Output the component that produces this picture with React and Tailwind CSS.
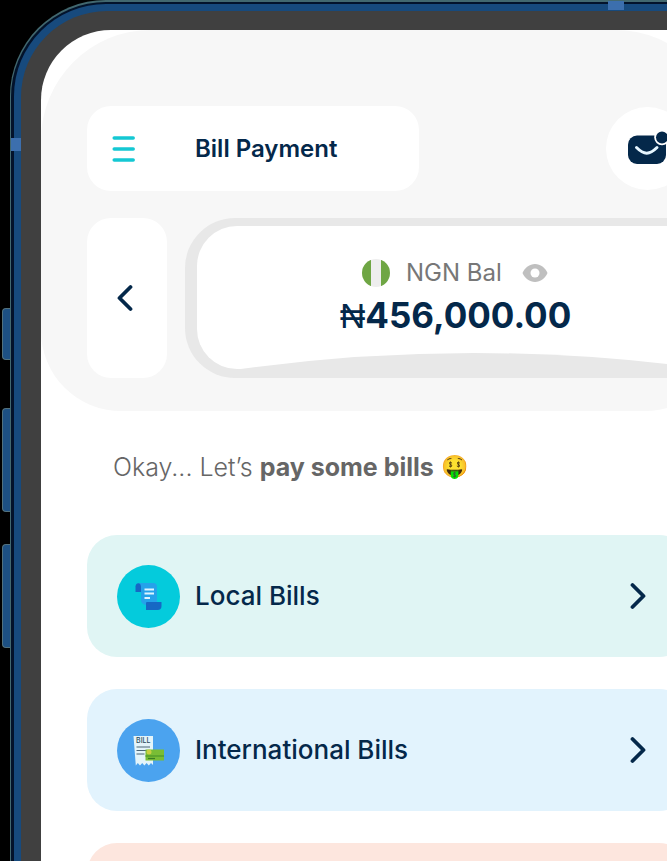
import React from 'react';

const ChevronIcon = ({ direction }) => (
  <svg
    className={direction === 'left' ? 'w-4 h-7 rotate-180' : 'w-4 h-7'}
    viewBox="0 0 16 28"
    fill="none"
    stroke="#04284a"
    strokeWidth="3.800"
    strokeLinecap="round"
    strokeLinejoin="round"
    aria-hidden="true"
  >
    <path d="M2.500 3 13.500 14 2.500 25" />
  </svg>
);

const MenuIcon = () => (
  <svg className="w-6 h-7" viewBox="0 0 24 28" stroke="#14c8d3" strokeWidth="3.500" strokeLinecap="round" aria-hidden="true">
    <path d="M2.200 3h19M2.200 14h19M2.200 25h19" />
  </svg>
);

const MailIcon = () => (
  <svg className="w-10 h-9" viewBox="0 0 40 36" fill="none" aria-hidden="true">
    <rect x="0" y="4.500" width="38" height="28.500" rx="9" fill="#04284a" />
    <path d="M8.500 16.500c7.500 7.500 13 7.500 20.500 0" stroke="#e6f6ff" strokeWidth="3" strokeLinecap="round" />
    <circle cx="34" cy="6.500" r="7.800" fill="#fff" />
    <circle cx="34" cy="6.500" r="6" fill="#04284a" />
  </svg>
);

const FlagIcon = () => (
  <svg className="w-7 h-7" viewBox="0 0 28 28" role="img" aria-label="Nigeria">
    <clipPath id="flag">
      <circle cx="14" cy="14" r="14" />
    </clipPath>
    <g clipPath="url(#flag)">
      <path fill="#6fa644" d="M0 0h9v28H0zM19 0h9v28h-9z" />
      <path fill="#eee" d="M9 0h10v28H9z" />
    </g>
  </svg>
);

const EyeIcon = () => (
  <svg className="w-[26px] h-5" viewBox="0 0 26 20" aria-hidden="true">
    <path fill="#bfbfbf" d="M.5 10C3 4.500 7.500 1 13 1s10 3.500 12.500 9C23 15.500 18.500 19 13 19S3 15.500.5 10z" />
    <circle cx="13" cy="10" r="4.500" fill="#fff" />
  </svg>
);

const ScrollIcon = () => (
  <svg className="w-[63px] h-[63px]" viewBox="0 0 63 63" aria-hidden="true">
    <circle cx="31.500" cy="31.500" r="31.500" fill="#04cbdc" />
    <path d="M21 18h15a4 4 0 0 1 4 4v18H29a5 5 0 0 1-5-5V24z" fill="#25a2ea" />
    <path d="M18.500 27v-5.500c0-4.500 5.500-4.500 5.500 0V27z" fill="#1668c4" />
    <path d="M30 37h14.500v4a4 4 0 0 1-4 4H29v-7a1 1 0 0 1 1-1z" fill="#1668c4" />
    <path d="M27.500 24.500H37M27.500 28.500H37M27.500 33H33" stroke="#dff5ff" strokeWidth="2" />
  </svg>
);

const ReceiptIcon = () => (
  <svg className="w-[63px] h-[63px]" viewBox="0 0 63 63" aria-hidden="true">
    <circle cx="31.500" cy="31.500" r="31.500" fill="#4ba3ef" />
    <path d="M16.500 17H36v29l-2-2-2.200 2.500-2.200-2.500-2.200 2.500-2.200-2.500-2.200 2.500-2.200-2.500-2 2.500z" fill="#e3f4fa" />
    <text x="26.300" y="24" textAnchor="middle" fontSize="7" fontWeight="500" fill="#2c4a5c">BILL</text>
    <path d="M19.500 28H33M19.500 31.500h10M19.500 35h8" stroke="#4a6475" strokeWidth="1.200" />
    <path d="M28.500 30.500H47v11H28.500z" fill="#79bd35" />
    <path d="M28.500 37H47" stroke="#559f2b" strokeWidth="1.500" />
    <path d="M31 39.500h7" stroke="#387d25" strokeWidth="1.200" />
    <circle cx="32" cy="33" r="2.500" fill="#c9cf41" />
  </svg>
);

const bills = [
  { name: 'Local Bills', icon: <ScrollIcon />, bg: 'bg-[#e0f5f4]' },
  { name: 'International Bills', icon: <ReceiptIcon />, bg: 'bg-[#e2f3fd]' }
];

const sideButton = 'w-2 shrink-0 rounded-l-sm border border-r-0 border-[#52717d] bg-[#1d5083]';

const Phone = ({ children }) => (
  <div className="flex h-screen overflow-hidden bg-black font-['Inter','Noto_Sans',sans-serif]">
    {/* volume and mute keys */}
    <div className="flex w-[10px] shrink-0 flex-col items-end pt-[308px]">
      <div className={`${sideButton} h-[52px]`} />
      <div className={`${sideButton} mt-12 h-[104px]`} />
      <div className={`${sideButton} mt-8 h-[104px]`} />
    </div>

    {/* metal frame, the right side runs out of view */}
    <div className="relative flex w-[calc(100%+48px)] shrink-0 rounded-tl-[96px] bg-[#42686f] pt-0.5 pl-px">
      <div className="flex grow rounded-tl-[95px] bg-[#03132b] pt-0.5 pl-[3px]">
        <div className="flex grow rounded-tl-[92px] bg-[#174a7d] pt-[7px] pl-[7px]">
          <div className="flex grow rounded-tl-[86px] bg-[#404040] pt-[19px] pl-5">
            <main className="grow overflow-hidden rounded-tl-[70px] bg-white">{children}</main>
          </div>
        </div>
      </div>
      <div className="absolute left-px top-[138px] h-[13px] w-[10px] bg-[#3c6fae]" />
      <div className="absolute left-[598px] top-px h-[9px] w-4 bg-[#3c6fae]" />
    </div>
  </div>
);

const BalanceCard = () => (
  <div className="relative -mr-12 grow rounded-[50px] bg-[#e8e8e8] pt-2 pr-3 pb-[9px] pl-3">
    <div className="flex h-full flex-col rounded-[40px] bg-white pt-[31px] pl-[143px]">
      <div className="relative z-10 flex items-center gap-4 pl-[22px] text-2xl leading-8 text-[#777]">
        <FlagIcon />
        <span>NGN Bal</span>
        <button type="button" aria-label="Hide balance" className="ml-1">
          <EyeIcon />
        </button>
      </div>
      <p className="relative z-10 mt-0.5 text-[35px] leading-12 font-bold text-[#04284a]">
        <span className="font-['Liberation_Sans_Narrow','Liberation_Sans',sans-serif] font-normal">₦</span>456,000.00
      </p>
    </div>
    <svg className="absolute bottom-0 left-12 h-[26px] w-[480px]" viewBox="0 0 480 26" aria-hidden="true">
      <path d="M0 18Q242-16 480 18v8H0z" fill="#e8e8e8" />
    </svg>
  </div>
);

const App = () => {
  return (
    <Phone>
      <header className="rounded-[110px] rounded-b-[80px] bg-[#f7f7f7] pt-[76px] pr-9 pb-[33px] pl-[46px]">
        <div className="flex items-center justify-between">
          <div className="flex h-[85px] w-[332px] items-center gap-[59px] rounded-3xl bg-white pl-[25px]">
            <button type="button" aria-label="Menu">
              <MenuIcon />
            </button>
            <h1 className="text-2xl font-semibold text-[#04284a]">Bill Payment</h1>
          </div>
          <button type="button" aria-label="Messages" className="flex size-[83px] items-center justify-center rounded-full bg-white">
            <MailIcon />
          </button>
        </div>
        <div className="mt-[27px] flex h-40 gap-[18px]">
          <button type="button" aria-label="Back" className="flex w-20 shrink-0 items-center justify-center rounded-3xl bg-white pr-1">
            <ChevronIcon direction="left" />
          </button>
          <BalanceCard />
        </div>
      </header>

      <p className="mt-10 pl-[72px] text-[25px] leading-8 text-[#666]">
        <span className="font-light">Okay... Let’s</span> <b className="font-bold">pay some bills</b>{' '}
        <span className="align-[2px] text-[22px] leading-none">🤑</span>
      </p>

      <div className="mt-[52px] flex flex-col gap-8 pr-9 pl-[46px]">
        {bills.map((bill) => (
          <button
            key={bill.name}
            type="button"
            className={`flex h-[122px] shrink-0 items-center gap-[15px] rounded-[30px] pr-[43px] pl-[30px] ${bill.bg}`}
          >
            {bill.icon}
            <span className="grow pb-0.5 text-left text-[26px] font-medium text-[#04284a]">{bill.name}</span>
            <ChevronIcon direction="right" />
          </button>
        ))}
        <div className="h-[122px] shrink-0 rounded-[30px] bg-[#fde6de]" />
      </div>
    </Phone>
  );
};

export default App;
